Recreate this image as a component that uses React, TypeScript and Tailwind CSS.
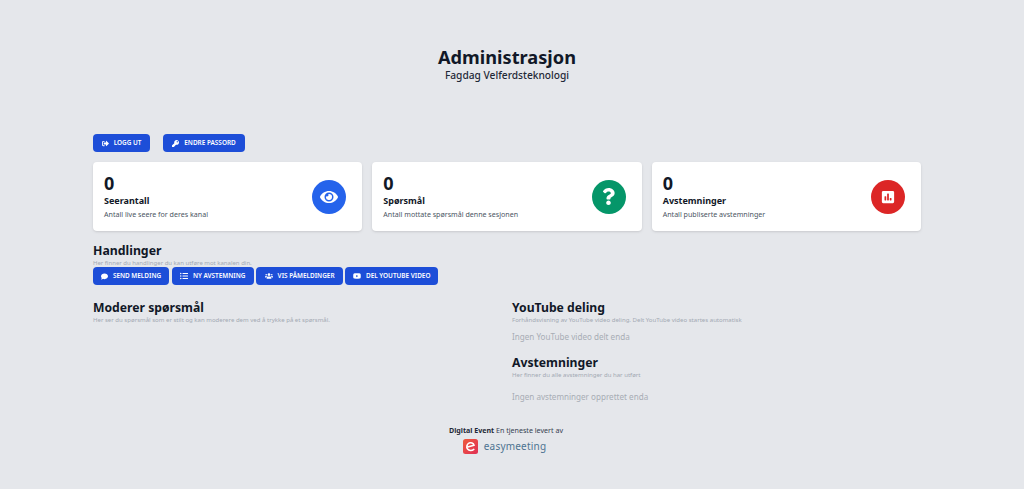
import { ReactNode } from 'react';
import { FaComment, FaEye, FaKey, FaListUl, FaPoll, FaQuestion, FaSignOutAlt, FaUsers, FaYoutube } from 'react-icons/fa';

type StatCardProps = {
  title: string;
  text: string;
  color: string;
  icon: ReactNode;
};

const StatCard = ({ title, text, color, icon }: StatCardProps) => (
  <div className="flex h-[69px] items-center justify-between rounded bg-white pl-[11px] pr-4 shadow-sm">
    <div className="-translate-y-[0.5px]">
      <p className="text-[18px] leading-[20px] font-bold text-[#111827]">0</p>
      <p className="text-[9px] leading-[16px] font-bold text-[#111827]">{title}</p>
      <p className="text-[7.1px] leading-[11px] text-[#4b5563]">{text}</p>
    </div>
    <div className={`flex h-[34px] w-[34px] items-center justify-center rounded-full text-white ${color}`}>{icon}</div>
  </div>
);

const ActionButton = ({ icon, label, className = '' }: { icon: ReactNode; label: string; className?: string }) => (
  <button className={`flex h-[18px] items-center justify-center gap-[5px] rounded-sm bg-[#1d4ed8] text-[6.4px] leading-[18px] font-semibold text-white ${className}`}>
    {icon}
    <span>{label}</span>
  </button>
);

const SectionHeader = ({ title, text }: { title: string; text: string }) => (
  <div>
    <h2 className="text-[12.2px] leading-[16px] font-bold text-[#111827]">{title}</h2>
    <p className="text-[6.05px] leading-[8px] text-[#a3a9b3]">{text}</p>
  </div>
);

export default function App() {
  return (
    <div className="h-[489px] overflow-hidden bg-[#e5e7eb] font-['Noto_Sans',sans-serif]">
      <header className="pt-[45px] pr-[10px] text-center">
        <h1 className="text-[18.2px] leading-[24px] font-bold text-[#111827]">Administrasjon</h1>
        <p className="text-[10.2px] leading-[12px] font-medium text-[#1f2937]">Fagdag Velferdsteknologi</p>
      </header>

      <main className="ml-[93px] w-[828px] pt-[53px]">
        <div className="flex gap-[13px]">
          <ActionButton className="w-[57px]" icon={<FaSignOutAlt className="text-[7px]" />} label="LOGG UT" />
          <ActionButton className="w-[82px]" icon={<FaKey className="text-[7px]" />} label="ENDRE PASSORD" />
        </div>

        <div className="mt-[10px] grid grid-cols-3 gap-[10px]">
          <StatCard title="Seerantall" text="Antall live seere for deres kanal" color="bg-[#2563eb]" icon={<FaEye className="text-[18px]" />} />
          <StatCard title="Spørsmål" text="Antall mottate spørsmål denne sesjonen" color="bg-[#059669]" icon={<FaQuestion className="text-[17px]" />} />
          <StatCard title="Avstemninger" text="Antall publiserte avstemninger" color="bg-[#dc2626]" icon={<FaPoll className="text-[14px]" />} />
        </div>

        <section className="mt-[12px]">
          <h2 className="text-[12.3px] leading-[16px] font-bold text-[#111827]">Handlinger</h2>
          <p className="text-[6px] leading-[8px] text-[#a3a9b3]">Her finner du handlinger du kan utføre mot kanalen din.</p>
          <div className="flex gap-[2.7px]">
            <ActionButton className="w-[76px]" icon={<FaComment className="text-[7px]" />} label="SEND MELDING" />
            <ActionButton className="w-[82px]" icon={<FaListUl className="text-[8px]" />} label="NY AVSTEMNING" />
            <ActionButton className="w-[86.4px]" icon={<FaUsers className="text-[8px]" />} label="VIS PÅMELDINGER" />
            <ActionButton className="w-[92.5px]" icon={<FaYoutube className="text-[8px]" />} label="DEL YOUTUBE VIDEO" />
          </div>
        </section>

        <div className="mt-[15px] flex">
          <section className="w-[419px]">
            <SectionHeader title="Moderer spørsmål" text="Her ser du spørsmål som er stilt og kan moderere dem ved å trykke på et spørsmål." />
          </section>
          <section className="flex-1">
            <SectionHeader title="YouTube deling" text="Forhåndsvisning av YouTube video deling. Delt YouTube video startes automatisk" />
            <p className="mt-[6px] text-[8.1px] leading-[14px] text-[#a8adb5]">Ingen YouTube video delt enda</p>
            <div className="mt-[11px]">
              <SectionHeader title="Avstemninger" text="Her finner du alle avstemninger du har utført" />
            </div>
            <p className="mt-[11px] text-[8.1px] leading-[14px] text-[#a8adb5]">Ingen avstemninger opprettet enda</p>
          </section>
        </div>
      </main>

      <footer className="mt-[20px] flex flex-col items-center pr-[12px]">
        <p className="text-[7.1px] leading-[12px] text-[#374151]">
          <span className="font-bold text-[#1f2937]">Digital Event</span> En tjeneste levert av
        </p>
        <div className="mt-[3px] flex items-center gap-[6px] pr-[3px]">
          <svg width="15" height="15" viewBox="0 0 15 15">
            <defs>
              <linearGradient id="logoFill" x1="0" y1="0" x2="1" y2="1">
                <stop offset="0" stopColor="#ee5a3c" />
                <stop offset="1" stopColor="#e02f55" />
              </linearGradient>
            </defs>
            <rect width="15" height="15" rx="2.5" fill="url(#logoFill)" />
            <path d="M3.8 8.2 L11 6.2 C10.4 4 8 3.2 6 4.1 C3.8 5.2 3.2 8 4.6 10 C6 11.9 8.8 12 10.8 10.4" fill="none" stroke="#fff" strokeWidth="1.6" strokeLinecap="round" />
          </svg>
          <span className="text-[10px] leading-[15px] tracking-[0.2px] text-[#4d7391]">easymeeting</span>
        </div>
      </footer>
    </div>
  );
}
